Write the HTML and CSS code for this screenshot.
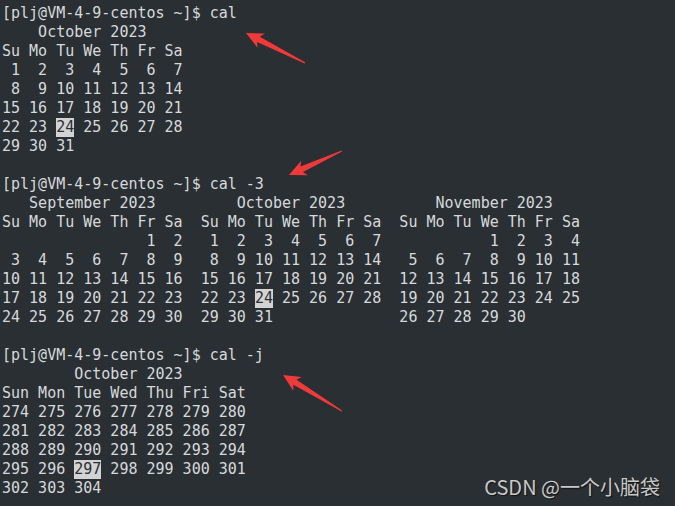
FILE: index.html
```html
<!DOCTYPE html>
<html lang="en">
<head>
<meta charset="utf-8">
<title>cal</title>
<link rel="stylesheet" href="styles.css">
</head>
<body>
<div class="screen">
<pre class="term">[plj@VM-4-9-centos ~]$ cal
    October 2023
Su Mo Tu We Th Fr Sa
 1  2  3  4  5  6  7
 8  9 10 11 12 13 14
15 16 17 18 19 20 21
22 23 <span class="hl">24</span> 25 26 27 28
29 30 31

[plj@VM-4-9-centos ~]$ cal -3
   September 2023         October 2023          November 2023
Su Mo Tu We Th Fr Sa  Su Mo Tu We Th Fr Sa  Su Mo Tu We Th Fr Sa
                1  2   1  2  3  4  5  6  7            1  2  3  4
 3  4  5  6  7  8  9   8  9 10 11 12 13 14   5  6  7  8  9 10 11
10 11 12 13 14 15 16  15 16 17 18 19 20 21  12 13 14 15 16 17 18
17 18 19 20 21 22 23  22 23 <span class="hl">24</span> 25 26 27 28  19 20 21 22 23 24 25
24 25 26 27 28 29 30  29 30 31              26 27 28 29 30

[plj@VM-4-9-centos ~]$ cal -j
        October 2023
Sun Mon Tue Wed Thu Fri Sat
274 275 276 277 278 279 280
281 282 283 284 285 286 287
288 289 290 291 292 293 294
295 296 <span class="hl">297</span> 298 299 300 301
302 303 304</pre>
<svg class="arrows" width="675" height="506" viewBox="0 0 675 506" aria-hidden="true">
  <g transform="translate(246,33) rotate(26.9)">
    <polygon class="arrow" points="0,0 17,-8 14,-3 66,-0.6 66,0.6 14,3 17,8"/>
  </g>
  <g transform="translate(289,175) rotate(-24.4)">
    <polygon class="arrow" points="0,0 17,-8 14,-3 58,-0.6 58,0.6 14,3 17,8"/>
  </g>
  <g transform="translate(283,375) rotate(31.4)">
    <polygon class="arrow" points="0,0 17,-8 14,-3 69,-0.6 69,0.6 14,3 17,8"/>
  </g>
</svg>
<div class="watermark">CSDN @一个小脑袋</div>
</div>
</body>
</html>
```

FILE: styles.css
```css
html, body {
  margin: 0;
  padding: 0;
  background: #2a2f33;
}

.screen {
  position: relative;
  width: 675px;
  height: 506px;
  overflow: hidden;
  background: #2a2f33;
}

.term {
  margin: 0;
  padding: 4px 0 0 2px;
  font-family: "DejaVu Sans Mono", "Liberation Mono", monospace;
  font-size: 15px;
  line-height: 19px;
  color: #d6d9dc;
  white-space: pre;
}

.hl {
  display: inline-block;
  background: #d3d3d3;
  color: #2a2f33;
}

.arrows {
  position: absolute;
  left: 0;
  top: 0;
  pointer-events: none;
}

.arrow {
  fill: #f03a3a;
}

.watermark {
  position: absolute;
  right: 15px;
  bottom: 7px;
  font-family: "Noto Sans CJK SC", "Noto Sans", sans-serif;
  font-size: 20px;
  line-height: 24px;
  color: #c8c8c8;
  text-shadow: 1px 1px 1px rgba(0, 0, 0, 0.6);
}
```
